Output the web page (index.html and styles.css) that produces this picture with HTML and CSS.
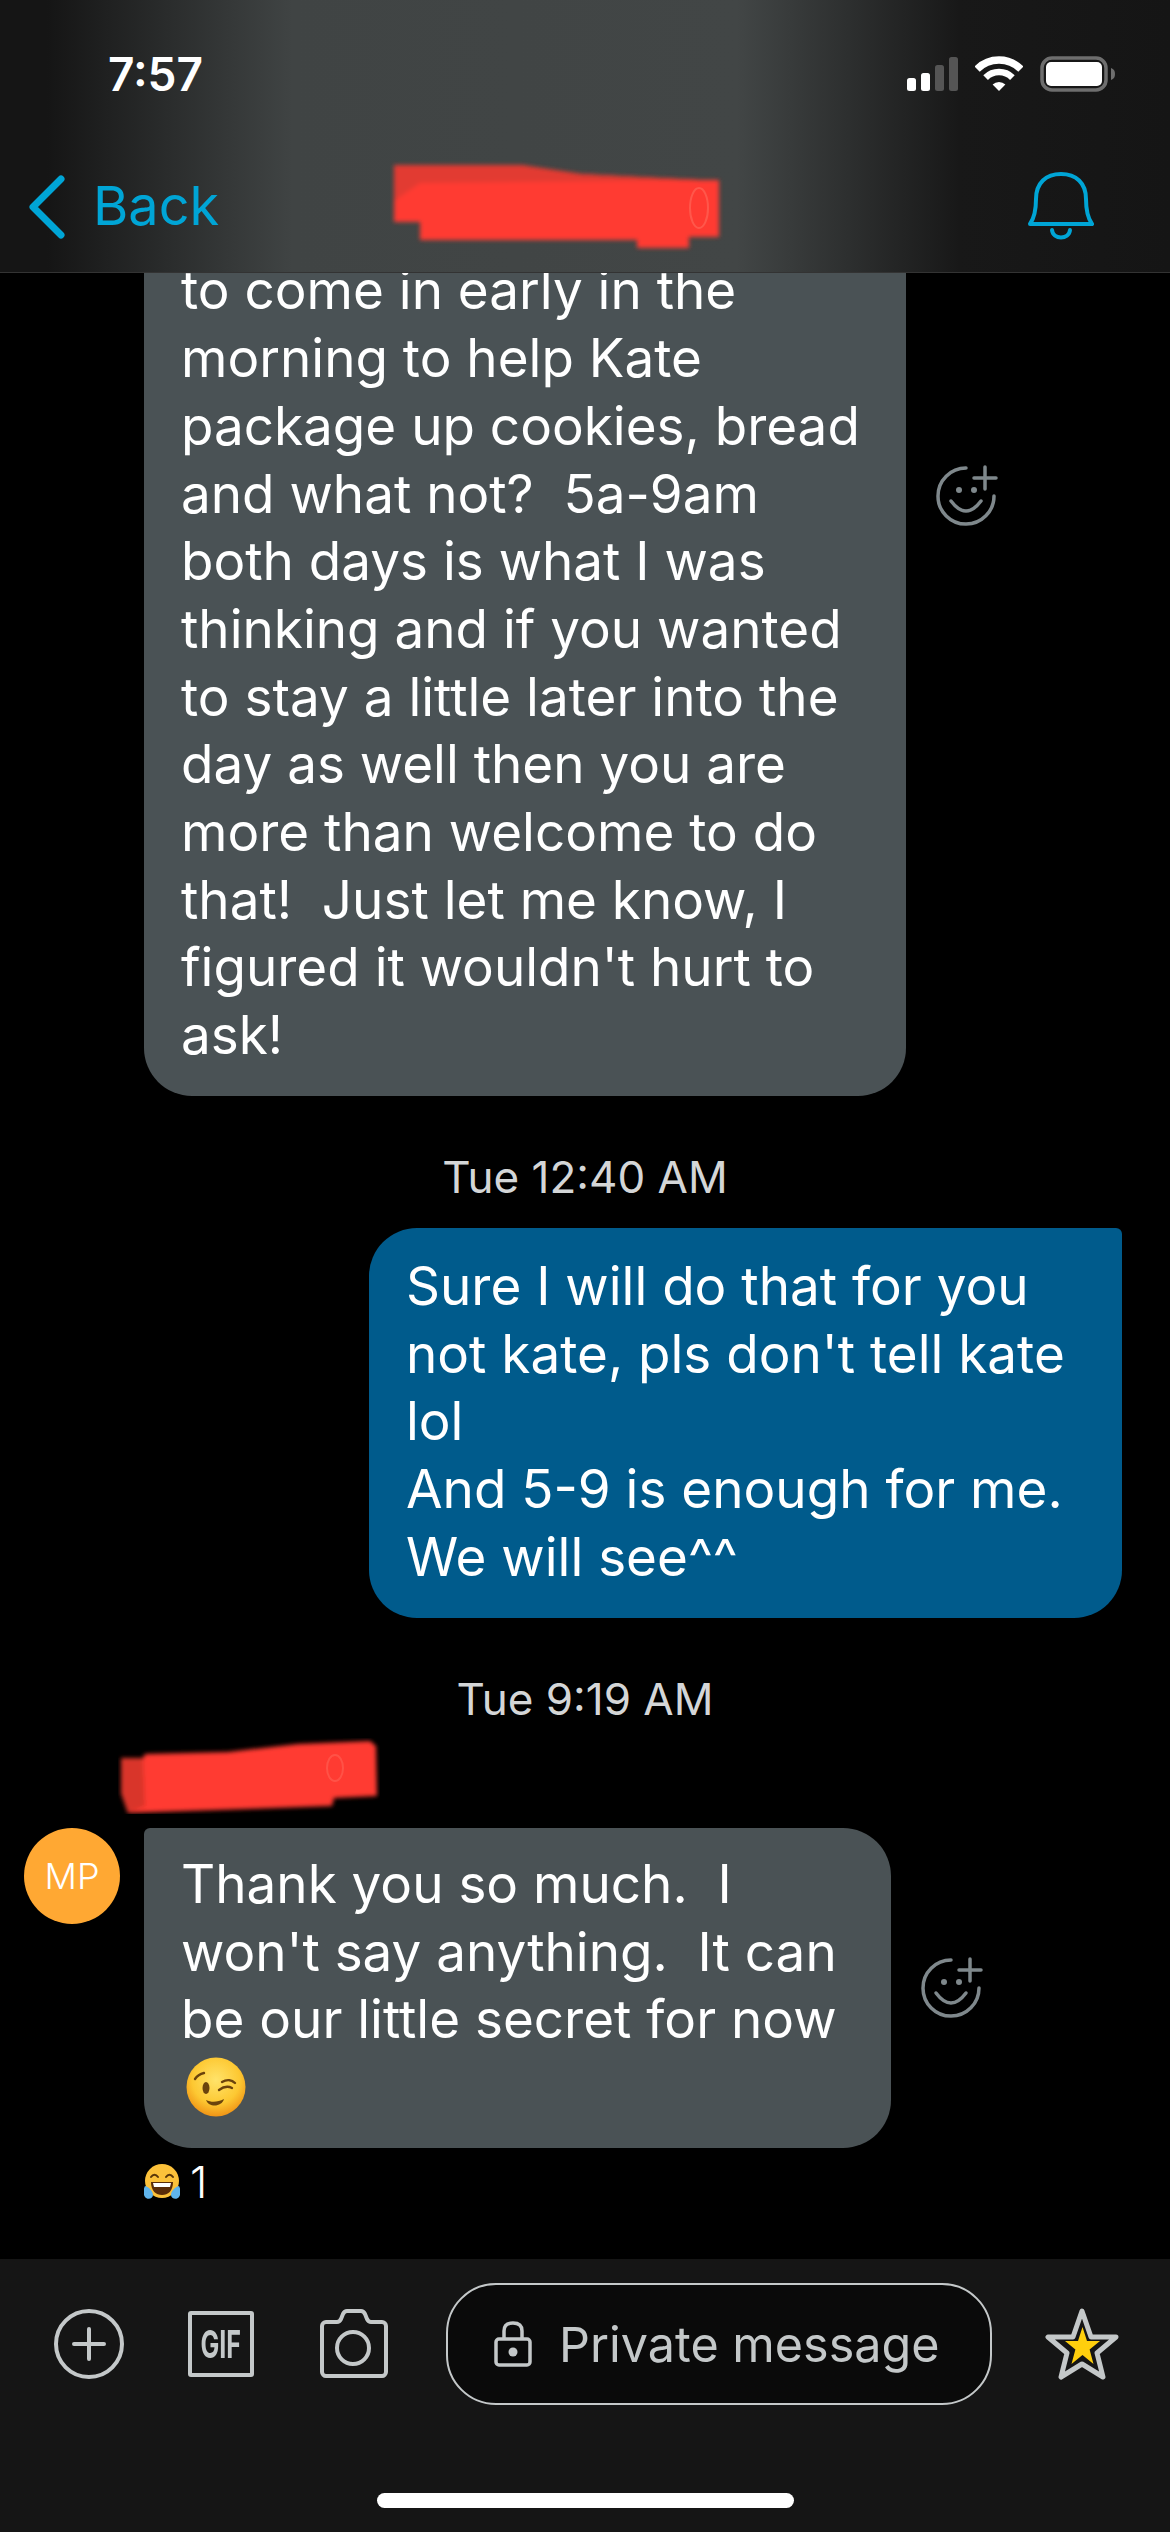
FILE: index.html
```html
<!DOCTYPE html>
<html lang="en">
<head>
  <meta charset="UTF-8" />
  <title>Private message</title>
  <link rel="stylesheet" href="styles.css">
</head>
<body>
  <div class="phone">
    <header class="top">
      <div class="status">
        <span class="clock">7:57</span>
        <div class="status-icons">
          <svg width="51" height="36" viewBox="0 0 51 36"><rect x="0" y="22" width="9" height="13" rx="2.5" fill="#fff"/><rect x="14" y="17" width="9" height="18" rx="2.5" fill="#fff"/><rect x="28" y="9" width="9" height="26" rx="2.5" fill="#555"/><rect x="42" y="1" width="9" height="34" rx="2.5" fill="#555"/></svg>
          <svg width="48" height="36" viewBox="0 0 48 36"><path d="M2.1 13.1A31 31 0 0 1 45.9 13.1" fill="none" stroke="#fff" stroke-width="7.4"/><path d="M10.6 21.6A19 19 0 0 1 37.4 21.6" fill="none" stroke="#fff" stroke-width="6.6"/><path d="M24 35L17.6 28.6A9 9 0 0 1 30.4 28.6z" fill="#fff"/></svg>
          <svg width="75" height="36" viewBox="0 0 75 36"><rect x="2" y="2" width="64" height="32" rx="10" fill="none" stroke="#6e6e6e" stroke-width="3.5"/><rect x="6" y="6" width="56" height="24" rx="5" fill="#fff"/><path d="M71 12c3 1 4 3 4 6s-1 5-4 6z" fill="#6e6e6e"/></svg>
        </div>
      </div>
      <nav class="nav">
        <div class="back">
          <svg width="40" height="64" viewBox="0 0 40 64"><path d="M34 4L6 32l28 28" fill="none" stroke="#00a5d6" stroke-width="7" stroke-linecap="round" stroke-linejoin="round"/></svg>
          <span>Back</span>
        </div>
        <svg class="scribble" width="334" height="92" viewBox="0 0 334 92"><defs><filter id="smear"><feGaussianBlur stdDeviation="2"/></filter></defs><g filter="url(#smear)"><path d="M4 4L131 4L191 13L310 19L329 19L329 76L299 76L299 87L247 87L247 79L30 79L30 61L4 61z" fill="#ff3b30"/><path d="M4 4L131 4L191 13L310 19L30 22L4 40z" fill="#e23a30"/></g><ellipse cx="309" cy="47" rx="9" ry="20" fill="none" stroke="#ff6a5c" stroke-width="2" opacity=".6"/></svg>
        <svg class="bell" width="66" height="72" viewBox="0 0 66 72"><path d="M2 53C7 46 8 38 8 28C8 12 18 3 33 3C48 3 58 12 58 28C58 38 59 46 64 53Z" fill="none" stroke="#00a5d6" stroke-width="4" stroke-linejoin="round"/><path d="M24 59c1 10 17 10 18 0" fill="none" stroke="#00a5d6" stroke-width="4" stroke-linecap="round"/></svg>
      </nav>
    </header>

    <main class="chat">
      <div class="row">
        <div class="bubble in first">to come in early in the<br>morning to help Kate<br>package up cookies, bread<br>and what not?&nbsp; 5a-9am<br>both days is what I was<br>thinking and if you wanted<br>to stay a little later into the<br>day as well then you are<br>more than welcome to do<br>that!&nbsp; Just let me know, I<br>figured it wouldn't hurt to<br>ask!</div>
        <svg class="react" width="64" height="64" viewBox="0 0 64 64"><use href="#smile-add"/></svg>
      </div>

      <div class="stamp">Tue 12:40 AM</div>

      <div class="bubble out">Sure I will do that for you<br>not kate, pls don't tell kate<br>lol<br>And 5-9 is enough for me.<br>We will see^^</div>

      <div class="stamp second">Tue 9:19 AM</div>

      <svg class="scribble name" width="262" height="76" viewBox="0 0 262 76"><g filter="url(#smear)"><path d="M3 20L25 20L27 16L110 14L180 6L252 3L258 8L259 58L216 60L214 68L10 75L3 55z" fill="#ff3b30"/><path d="M3 20L25 20L27 68L10 75L3 55z" fill="#d9362c"/></g><ellipse cx="217" cy="30" rx="8" ry="13" fill="none" stroke="#ff6a5c" stroke-width="2" opacity=".5"/></svg>

      <div class="row with-avatar">
        <div class="avatar">MP</div>
        <div class="bubble in last">Thank you so much.&nbsp; I<br>won't say anything.&nbsp; It can<br>be our little secret for now<br>
          <svg class="wink" width="60" height="60" viewBox="0 0 60 60"><defs><radialGradient id="face" cx="50%" cy="38%" r="62%"><stop offset="0" stop-color="#ffe36a"/><stop offset="0.65" stop-color="#fdc832"/><stop offset="1" stop-color="#f09416"/></radialGradient></defs><circle cx="30" cy="30" r="29.5" fill="url(#face)"/><ellipse cx="20" cy="31" rx="3.5" ry="6" fill="#6b430c"/><path d="M9 22c2-3 5-5 9-6M36 25c5-3 10-2 13 1M33 33c4-3 9-4 13-2" fill="none" stroke="#6b430c" stroke-width="2.4" stroke-linecap="round"/><path d="M20 43c6 3 12 2 18-1-2 8-15 9-18 1z" fill="#6b430c"/></svg>
        </div>
        <svg class="react" width="64" height="64" viewBox="0 0 64 64"><use href="#smile-add"/></svg>
      </div>

      <div class="reaction">
        <svg width="36" height="38" viewBox="0 0 36 38"><circle cx="18" cy="18" r="17" fill="#fcc13a"/><path d="M7 14c2-3 5-3 7 0M22 14c2-3 5-3 7 0" fill="none" stroke="#5a3608" stroke-width="2" stroke-linecap="round"/><path d="M7 19h22c0 9-5 13-11 13S7 28 7 19z" fill="#5a2c08"/><path d="M9 20h18l-1 4H10z" fill="#fff"/><path d="M1 23c4 1 8 5 8 9s-6 5-8 2-2-7 0-11zM35 23c-4 1-8 5-8 9s6 5 8 2 2-7 0-11z" fill="#5fb4ec"/></svg>
        <span>1</span>
      </div>
    </main>

    <footer class="bottom">
      <div class="composer">
        <svg class="tool" width="70" height="70" viewBox="0 0 70 70"><circle cx="35" cy="35" r="33" fill="none" stroke="#c4c8c9" stroke-width="4"/><path d="M35 20v30M20 35h30" stroke="#c4c8c9" stroke-width="4" stroke-linecap="round"/></svg>
        <div class="gif"><span>GIF</span></div>
        <svg class="tool camera" width="68" height="70" viewBox="0 0 68 70"><path d="M6 13H17C19 13 20 12 21 10L23 5C24 3 25 2 27 2H41C43 2 44 3 45 5L47 10C48 12 49 13 51 13H62C64 13 66 15 66 17V63C66 65 64 67 62 67H6C4 67 2 65 2 63V17C2 15 4 13 6 13Z" fill="none" stroke="#c4c8c9" stroke-width="4" stroke-linejoin="round"/><circle cx="33" cy="39" r="16" fill="none" stroke="#c4c8c9" stroke-width="4"/></svg>
        <div class="pm">
          <svg width="38" height="46" viewBox="0 0 38 46"><rect x="2" y="18" width="34" height="26" rx="3" fill="none" stroke="#c4c8c9" stroke-width="3.5"/><path d="M10 18V10C10 5 13 2 19 2s9 3 9 8v8" fill="none" stroke="#c4c8c9" stroke-width="3.5"/><circle cx="19" cy="31" r="4.5" fill="#c4c8c9"/></svg>
          <span>Private message</span>
        </div>
        <svg class="star" width="74" height="74" viewBox="0 0 74 74"><path d="M37 4L46 30H71L52 46L58 70L37 57L16 70L22 46L3 30H28z" fill="none" stroke="#c4c8c9" stroke-width="5" stroke-linejoin="round"/><path d="M37.5 20L42 34H55L44.6 42.5L48.5 57L37.5 48L26.5 57L30.4 42.5L20 34H33z" fill="#ffcf0d"/></svg>
      </div>
      <div class="home"></div>
    </footer>
  </div>

  <svg class="defs" width="0" height="0"><defs><g id="smile-add" fill="none" stroke="#7f888c" stroke-width="3.5" stroke-linecap="round"><path d="M32 4.1A28 28 0 1 0 60 32"/><path d="M51 3v22M40 14h22"/><path d="M17 37Q32 57 47 37"/><circle cx="25" cy="26" r="3" fill="#7f888c" stroke="none"/><circle cx="40" cy="26" r="3" fill="#7f888c" stroke="none"/></g></defs></svg>
</body>
</html>
```

FILE: styles.css
```css
body {
  margin: 0;
  background: #000;
  font-family: Inter, "Noto Sans", sans-serif;
  color: #fff;
}
.phone {
  width: 1170px;
  height: 2532px;
  display: flex;
  flex-direction: column;
  overflow: hidden;
}
.top {
  height: 273px;
  flex: none;
  box-sizing: border-box;
  padding-top: 54px;
  background: linear-gradient(90deg, #151515 4%, #404444 25%, #424646 63%, #181818 82%, #151515 100%);
  border-bottom: 1px solid #333;
  position: relative;
  z-index: 1;
}
.status {
  height: 40px;
  display: flex;
  justify-content: space-between;
  align-items: center;
  padding: 0 55px 0 108px;
}
.clock {
  font-size: 46px;
  font-weight: 600;
}
.status-icons {
  display: flex;
  align-items: center;
  gap: 17px;
}
.nav {
  margin-top: 67px;
  display: flex;
  align-items: center;
  padding: 0 76px 0 27px;
}
.back {
  display: flex;
  align-items: center;
  gap: 26px;
  color: #00a5d6;
  font-size: 54px;
}
.back span {
  margin-top: -3px;
}
.nav .scribble {
  margin-left: 171px;
}
.bell {
  margin-left: auto;
}
.chat {
  flex: 1;
  min-height: 0;
  display: flex;
  flex-direction: column;
  justify-content: flex-end;
  overflow: hidden;
}
.row {
  display: flex;
  align-items: center;
  flex: none;
}
.bubble {
  flex: none;
  box-sizing: border-box;
  font-size: 53px;
  line-height: 67.7px;
  padding: 0 37px;
}
.in {
  background: #4a5255;
  border-radius: 6px 48px 48px 48px;
}
.first {
  width: 762px;
  margin-left: 144px;
  padding-top: 362px;
  padding-bottom: 26px;
}
.react {
  margin-left: 28px;
}
.stamp {
  flex: none;
  text-align: center;
  font-size: 44px;
  line-height: 54px;
  color: #d4d6d7;
  margin-top: 54px;
}
.second {
  margin-top: 54px;
}
.out {
  align-self: flex-end;
  width: 753px;
  margin: 24px 48px 0 0;
  padding: 25px 37px 26.5px;
  background: #005b8c;
  border-radius: 48px 6px 48px 48px;
}
.name {
  flex: none;
  margin: 12px 0 0 118px;
}
.with-avatar {
  margin-top: 14px;
  padding-left: 24px;
}
.avatar {
  flex: none;
  align-self: flex-start;
  width: 96px;
  height: 96px;
  border-radius: 50%;
  background: #ffa833;
  margin-right: 24px;
  display: flex;
  align-items: center;
  justify-content: center;
  font-size: 36px;
  font-weight: 300;
}
.last {
  width: 747px;
  padding-top: 23px;
  padding-bottom: 31px;
}
.wink {
  display: block;
  margin: 3px 0 0 5px;
}
.reaction {
  flex: none;
  display: flex;
  align-items: center;
  gap: 10px;
  padding-left: 144px;
  margin: 7px 0 50px;
  font-size: 44px;
  font-weight: 300;
}
.bottom {
  flex: none;
  height: 273px;
  box-sizing: border-box;
  background: #151515;
  padding-top: 24px;
}
.composer {
  display: flex;
  align-items: center;
  padding-left: 54px;
}
.gif {
  width: 58px;
  height: 58px;
  border: 4px solid #c4c8c9;
  border-radius: 3px;
  margin-left: 64px;
  color: #c4c8c9;
  font-size: 38px;
  font-weight: 700;
  display: flex;
  align-items: center;
  justify-content: center;
}
.gif span {
  transform: scaleX(0.66);
}
.camera {
  margin-left: 66px;
}
.pm {
  width: 546px;
  height: 122px;
  box-sizing: border-box;
  margin-left: 58px;
  border: 2px solid #c4c8c9;
  border-radius: 50px;
  background: #0a0a0a;
  display: flex;
  align-items: center;
  gap: 27px;
  padding-left: 46px;
  color: #c4c8c9;
  font-size: 48.5px;
}
.star {
  margin-left: 53px;
}
.home {
  width: 417px;
  height: 15px;
  border-radius: 8px;
  background: #fff;
  margin: 88px auto 0;
}
.defs {
  position: absolute;
}
```
